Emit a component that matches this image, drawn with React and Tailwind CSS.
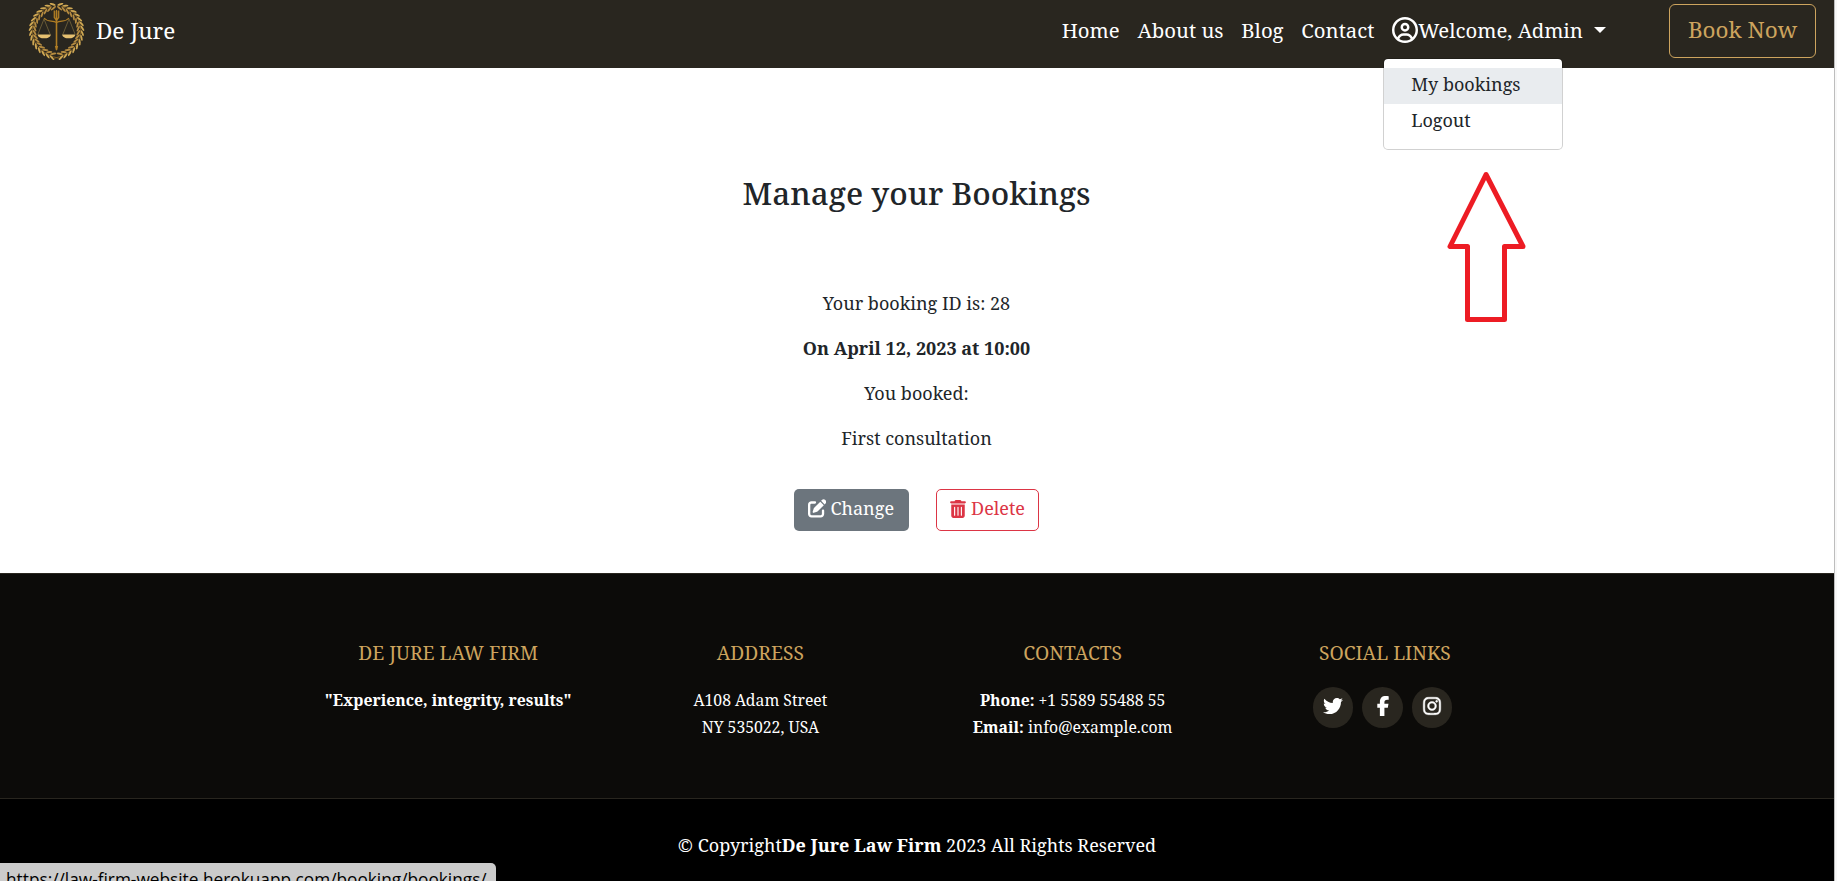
import { FaRegCircleUser, FaPenToSquare, FaTrashCan, FaFacebookF, FaTwitter, FaInstagram } from 'react-icons/fa6';

const BRANCH = [
  [24, 3.5, -10], [19.5, 5, -24], [15.5, 7.5, -34], [12, 10.500, -44], [9, 14, -54], [6.8, 18, -66], [5.2, 22.2, -76],
  [4.6, 26.5, -86], [4.8, 31, -96], [5.8, 35.3, -106], [7.6, 39.4, -116], [10.2, 43, -127], [13.4, 46.4, -138], [17.2, 49.2, -148], [21.4, 51.4, -156], [25.6, 53, -162],
];

function Branch() {
  return (
    <g>
      <path d="M24 3.500C9 7 3 20 4.500 31C6 43 15 51.500 31.500 55.500" fill="none" stroke="#8a6524" strokeWidth="0.8" />
      {BRANCH.map(([x, y, a], i) => (
        <g key={i} transform={`translate(${x} ${y}) rotate(${a})`}>
          <ellipse cx="0" cy="-2.300" rx="3.200" ry="1" transform="rotate(28)" fill="#d0a853" />
          <ellipse cx="0" cy="2.300" rx="3.200" ry="1" transform="rotate(-28)" fill="#b58b40" />
        </g>
      ))}
    </g>
  );
}

function Logo() {
  return (
    <svg viewBox="0 0 57 57" className="mt-[2px] h-[57px] w-[57px] shrink-0">
      <Branch />
      <g transform="translate(57 0) scale(-1 1)"><Branch /></g>
      <g stroke="#b07d24" fill="none">
        <path d="M28.500 8v39" strokeWidth="1.600" />
        <path d="M26.300 7.500v7l2.200 3 2.200-3v-7M28.500 7v10" strokeWidth="1.300" />
        <path d="M16 15c4 5 8.500 1.500 12.500 4.500 4-3 8.500 .5 12.500-4.500" strokeWidth="1.200" />
        <path d="M16 16l-6 15M16 16l6 15M41 16l-6 15M41 16l6 15" stroke="#82703f" strokeWidth="0.700" />
      </g>
      <path d="M9.500 31.500h13.500c-1 3.200-3.500 3.800-6.750 3.800s-5.750-.6-6.750-3.800zM34 31.500h13.500c-1 3.200-3.500 3.800-6.750 3.800s-5.750-.6-6.750-3.800z" fill="#e6c070" />
      <path d="M26.800 43h3.400l-1.700 5z" fill="#b07d24" />
    </svg>
  );
}

function FooterColumn({ title, children }) {
  return (
    <div className="text-center">
      <h4 className="mb-[23px] text-[19.25px] leading-[23px] font-normal uppercase text-[#cda45e]">{title}</h4>
      {children}
    </div>
  );
}

const SOCIAL = [
  { Icon: FaTwitter, style: 'mb-[3px] size-[20px]' },
  { Icon: FaFacebookF, style: 'mb-[3px] ml-px size-[20px]' },
  { Icon: FaInstagram, style: 'mb-[3px] size-[20px] stroke-white stroke-[12px]' },
];

export default function App() {
  return (
    <div className="flex h-[881px] w-[1837px] overflow-hidden bg-white font-['Noto_Serif',serif] text-[18px] leading-[27px] text-[#212529]">
      <div className="relative flex w-[1834px] flex-col">
        <header className="flex h-[68px] items-center bg-[#29261f] pr-[18px] pb-2 pl-[27.5px] text-white">
          <Logo />
          <span className="ml-[11.5px] text-[22.5px]">De Jure</span>
          <nav className="ml-auto flex items-center gap-[17.75px] text-[20.35px]">
            <a>Home</a>
            <a>About us</a>
            <a>Blog</a>
            <a>Contact</a>
            <div className="relative flex items-center">
              <FaRegCircleUser className="size-[26px]" />
              <span>Welcome, Admin</span>
              <span className="ml-[11px] border-x-[6px] border-t-[6px] border-x-transparent border-t-white" />
              <div className="absolute top-[41px] -left-[9px] z-10 w-[180px] rounded-[5px] border border-black/18 bg-white bg-clip-padding pt-[9px] pb-[9px] text-[18px] leading-[27px] text-[#212529]">
                <a className="block bg-[#e9ecef] px-[27px] pt-[3.5px] pb-[5.5px]">My bookings</a>
                <a className="block px-[27px] pt-[3.5px] pb-[5.5px]">Logout</a>
              </div>
            </div>
          </nav>
          <button className="mt-[2px] ml-[63px] h-[54px] w-[147px] rounded-[6px] border border-[#cda45e] pb-[3px] text-[22.5px] text-[#cda45e]">Book Now</button>
        </header>

        <main className="flex h-[505px] flex-col items-center pt-[106px] pr-px">
          <h2 className="text-[31.5px] leading-[38px] font-medium">Manage your Bookings</h2>
          <div className="mt-[78px] flex flex-col items-center gap-[18px]">
            <p>Your booking ID is: 28</p>
            <p className="font-bold">On April 12, 2023 at 10:00</p>
            <p>You booked:</p>
            <p>First consultation</p>
          </div>
          <div className="mt-[37px] mr-px flex gap-[27px]">
            <button className="flex h-[42px] w-[115px] items-center justify-center gap-1 rounded-[5px] bg-[#6c757d] pb-[3px] text-white">
              <FaPenToSquare className="size-[18.5px]" />Change
            </button>
            <button className="flex h-[42px] w-[103px] items-center justify-center gap-1 rounded-[5px] border border-[#dc3545] pb-[3px] text-[#dc3545]">
              <FaTrashCan className="size-[18px]" />Delete
            </button>
          </div>
          <svg viewBox="0 0 80 152" className="absolute top-[170px] left-[1446px] h-[152px] w-[80px]">
            <path d="M40 4.500L4 76.500h17.500V149.500h37V76.500H77z" fill="none" stroke="#ed1c24" strokeWidth="5" strokeLinejoin="round" />
          </svg>
        </main>

        <footer className="flex flex-1 flex-col text-[15.75px] text-white">
          <div className="flex h-[226px] justify-center border-t border-b border-t-[#29261f] border-b-[#29261f] bg-[#0c0b09] pt-[67px] pr-px">
            <div className="grid w-[1249px] grid-cols-4">
              <FooterColumn title="De Jure Law Firm">
                <p className="font-bold">"Experience, integrity, results"</p>
              </FooterColumn>
              <FooterColumn title="Address">
                <p>A108 Adam Street<br />NY 535022, USA</p>
              </FooterColumn>
              <FooterColumn title="Contacts">
                <p><b>Phone:</b> +1 5589 55488 55<br /><b>Email:</b> info@example.com</p>
              </FooterColumn>
              <FooterColumn title="Social Links">
                <div className="mr-[5px] flex justify-center gap-[9px]">
                  {SOCIAL.map(({ Icon, style }, i) => (
                    <a key={i} className="flex h-[40.5px] w-[40.5px] items-center justify-center rounded-full bg-[#29261f]"><Icon className={style} /></a>
                  ))}
                </div>
              </FooterColumn>
            </div>
          </div>
          <div className="flex-1 bg-black pt-[33px] text-center text-[18px]">© Copyright<b>De Jure Law Firm</b> 2023 All Rights Reserved</div>
        </footer>

        <div className="absolute top-[863px] left-0 h-[18px] w-[496px] overflow-hidden rounded-tr-[5px] bg-[#cbcbcb] pt-[3px] pl-[6px] font-['Open_Sans',sans-serif] text-[17.25px] leading-[27px] whitespace-nowrap text-black">https://law-firm-website.herokuapp.com/booking/bookings/</div>
      </div>
      <div className="w-[3px] border-l border-[#bdbdbd] bg-[#f8f8f8]" />
    </div>
  );
}
